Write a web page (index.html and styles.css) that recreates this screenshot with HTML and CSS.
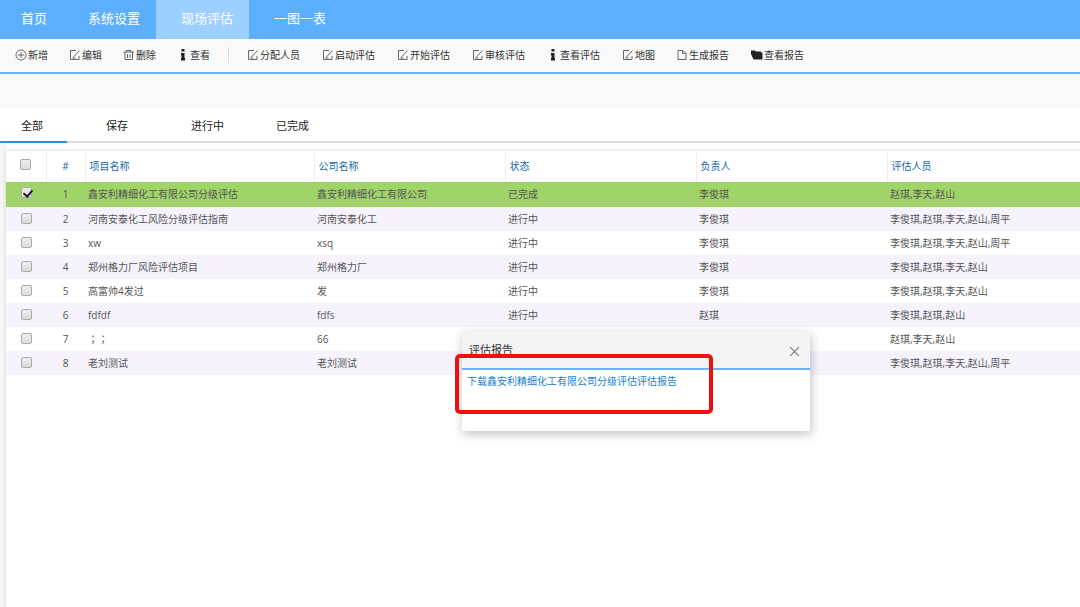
FILE: index.html
```html
<!DOCTYPE html>
<html lang="zh-CN">
<head>
<meta charset="utf-8">
<title>现场评估</title>
<link rel="stylesheet" href="styles.css">
</head>
<body>
<svg class="sprite" aria-hidden="true">
  <symbol id="i-add" viewBox="0 0 12 12"><circle cx="6" cy="6" r="5"/><path d="M6 3v6M3 6h6"/></symbol>
  <symbol id="i-edit" viewBox="0 0 12 12"><path d="M7 1.500H1.500v9h8.500V7M4 8.500L10.500 1.500M3.500 9h3"/></symbol>
  <symbol id="i-del" viewBox="0 0 12 12"><path d="M0.500 3h10.500M3.500 3V1.500h4.500V3M2 3v7.500h7.500V3M4.500 5v4M7 5v4"/></symbol>
  <symbol id="i-info" viewBox="0 0 12 12"><path class="solid" d="M4.500 0h3v2.500h-3zM4 4h3.500v2.500H4zM4.500 6h3v3h-3zM4 9h4v2.500H4z"/></symbol>
  <symbol id="i-file" viewBox="0 0 12 12"><path d="M2 1.500h5L10 4.500v6H2zM6.500 1.500v3h3"/></symbol>
  <symbol id="i-folder" viewBox="0 0 12 12"><path class="solid" d="M0 1.500h4l1 1h5V3.500h1.500V10.500H2.500L0 5z"/></symbol>
</svg>

<nav class="nav">
  <a href="#">首页</a>
  <a href="#">系统设置</a>
  <a href="#" class="active" aria-current="page">现场评估</a>
  <a href="#">一图一表</a>
</nav>

<div class="toolbar">
  <button type="button" class="tool"><svg><use href="#i-add"/></svg>新增</button>
  <button type="button" class="tool"><svg><use href="#i-edit"/></svg>编辑</button>
  <button type="button" class="tool"><svg><use href="#i-del"/></svg>删除</button>
  <button type="button" class="tool last"><svg><use href="#i-info"/></svg>查看</button>
  <span class="divider"></span>
  <button type="button" class="tool wide"><svg><use href="#i-edit"/></svg>分配人员</button>
  <button type="button" class="tool wide"><svg><use href="#i-edit"/></svg>启动评估</button>
  <button type="button" class="tool wide"><svg><use href="#i-edit"/></svg>开始评估</button>
  <button type="button" class="tool wide"><svg><use href="#i-edit"/></svg>审核评估</button>
  <button type="button" class="tool wide"><svg><use href="#i-info"/></svg>查看评估</button>
  <button type="button" class="tool"><svg><use href="#i-edit"/></svg>地图</button>
  <button type="button" class="tool wide"><svg><use href="#i-file"/></svg>生成报告</button>
  <button type="button" class="tool wide"><svg><use href="#i-folder"/></svg>查看报告</button>
</div>

<div class="filter"></div>

<div class="tabs">
  <button type="button" class="tab active">全部</button>
  <button type="button" class="tab">保存</button>
  <button type="button" class="tab">进行中</button>
  <button type="button" class="tab">已完成</button>
</div>

<main class="content">
  <div class="panel">
    <table class="grid">
      <colgroup><col class="c-check"><col class="c-num"><col class="c-name"><col class="c-mid"><col class="c-mid"><col class="c-mid"><col></colgroup>
      <thead>
        <tr><th><input type="checkbox" aria-label="全选"></th><th>#</th><th>项目名称</th><th>公司名称</th><th>状态</th><th>负责人</th><th>评估人员</th></tr>
      </thead>
      <tbody>
        <tr class="selected"><td><input type="checkbox" aria-label="1" checked></td><td>1</td><td>鑫安利精细化工有限公司分级评估</td><td>鑫安利精细化工有限公司</td><td>已完成</td><td>李俊琪</td><td>赵琪,李天,赵山</td></tr>
        <tr><td><input type="checkbox" aria-label="2"></td><td>2</td><td>河南安泰化工风险分级评估指南</td><td>河南安泰化工</td><td>进行中</td><td>李俊琪</td><td>李俊琪,赵琪,李天,赵山,周平</td></tr>
        <tr><td><input type="checkbox" aria-label="3"></td><td>3</td><td>xw</td><td>xsq</td><td>进行中</td><td>李俊琪</td><td>李俊琪,赵琪,李天,赵山,周平</td></tr>
        <tr><td><input type="checkbox" aria-label="4"></td><td>4</td><td>郑州格力厂风险评估项目</td><td>郑州格力厂</td><td>进行中</td><td>李俊琪</td><td>李俊琪,赵琪,李天,赵山</td></tr>
        <tr><td><input type="checkbox" aria-label="5"></td><td>5</td><td>高富帅4发过</td><td>发</td><td>进行中</td><td>李俊琪</td><td>李俊琪,赵琪,李天,赵山</td></tr>
        <tr><td><input type="checkbox" aria-label="6"></td><td>6</td><td>fdfdf</td><td>fdfs</td><td>进行中</td><td>赵琪</td><td>李俊琪,赵琪,赵山</td></tr>
        <tr><td><input type="checkbox" aria-label="7"></td><td>7</td><td class="centered-marks" lang="zh-TW">；；</td><td>66</td><td></td><td></td><td>赵琪,李天,赵山</td></tr>
        <tr><td><input type="checkbox" aria-label="8"></td><td>8</td><td>老刘测试</td><td>老刘测试</td><td></td><td></td><td>李俊琪,赵琪,李天,赵山,周平</td></tr>
      </tbody>
    </table>
  </div>
</main>

<section class="dialog" role="dialog" aria-labelledby="dialog-title">
  <header class="dialog-head">
    <h2 id="dialog-title">评估报告</h2>
    <button type="button" class="close" aria-label="关闭"><svg viewBox="0 0 10 10"><path d="M1 1l8 8M9 1L1 9"/></svg></button>
  </header>
  <div class="dialog-body"><a href="#">下载鑫安利精细化工有限公司分级评估评估报告</a></div>
  <div class="highlight"></div>
</section>
</body>
</html>
```

FILE: styles.css
```css
* { box-sizing: border-box; }

body {
  margin: 0;
  min-height: 100vh;
  display: flex;
  flex-direction: column;
  position: relative;
  background: #fff;
  color: #555;
  font: 10px/16px "Open Sans", "Noto Sans CJK SC", sans-serif;
}

button {
  font: inherit;
  color: inherit;
  background: none;
  border: 0;
  padding: 0;
  text-align: left;
  white-space: nowrap;
  cursor: pointer;
}

a { text-decoration: none; }

.sprite { display: none; }

.nav {
  display: flex;
  height: 39px;
  background: #5cafff;
}

.nav a {
  padding: 0 16px 0 25px;
  color: #fff;
  font-size: 13px;
  line-height: 37px;
}

.nav a:first-child { padding-left: 21px; }
.nav a.active { background: #9dcfff; }

.toolbar {
  display: flex;
  align-items: center;
  height: 35px;
  padding: 0 0 2px 15px;
  background: #f9f9f9;
  border-bottom: 2px solid #6bb2f5;
  color: #333;
}

.tool {
  display: flex;
  align-items: center;
  flex: none;
  width: 54px;
}

.tool.wide { width: 75px; }
.tool.last { width: 51px; }

.tool svg {
  width: 12px;
  height: 12px;
  margin-right: 1px;
  fill: none;
  stroke: #666;
}

.solid { fill: #222; stroke: none; }

.divider {
  width: 1px;
  height: 16px;
  margin-right: 18px;
  background: #ddd;
}

.filter {
  height: 34px;
  background: #f9f9f9;
}

.tabs {
  display: flex;
  gap: 18px;
  height: 35px;
  border-bottom: 2px solid #ddd;
}

.tab {
  width: 67px;
  height: 35px;
  padding: 2px 0 0 21px;
  border-bottom: 2px solid transparent;
  font-size: 11px;
  color: #222;
}

.tab.active { border-color: #2f8fdd; }

.content {
  flex: 1;
  display: flex;
  padding: 8px 0 0 6px;
  background: linear-gradient(90deg, #f6f6f6 6px, #fff 6px);
}

.panel {
  flex: 1;
  background: #fff;
  box-shadow: 0 0 4px #ccc;
}

.grid {
  width: 100%;
  table-layout: fixed;
  border-collapse: collapse;
}

.c-check { width: 40px; }
.c-num { width: 39px; }
.c-name { width: 229px; }
.c-mid { width: 191px; }

.grid th {
  height: 31px;
  padding: 0 4px 2px;
  border-left: 1px solid #eee;
  color: #2068a8;
  font-weight: 400;
  text-align: left;
}

.grid th:first-child { border-left: 0; }

.grid td {
  height: 24px;
  padding: 0 3px;
  white-space: nowrap;
}

.grid th:nth-child(-n+2),
.grid td:nth-child(-n+2) { text-align: center; }

.grid tbody tr:nth-child(even) { background: #f6f3fc; }
.grid tbody tr.selected { background: #a0d468; }
.grid tr.selected td { height: 25px; padding-bottom: 2px; }

.grid .centered-marks {
  font-family: "Noto Sans CJK TC", sans-serif;
  text-spacing-trim: space-all;
}

.grid input {
  appearance: none;
  display: block;
  width: 11px;
  height: 11px;
  margin: 0 auto 2px;
  border: 1px solid #aaa;
  border-radius: 2px;
  background: linear-gradient(#eee, #ddd);
}

.grid input:checked::before {
  content: "";
  display: block;
  width: 4px;
  height: 7px;
  margin: 0 0 0 3px;
  border: solid #222;
  border-width: 0 2px 2px 0;
  transform: rotate(40deg);
}

.dialog {
  position: absolute;
  left: 462px;
  top: 332px;
  width: 348px;
  height: 99px;
  background: #fff;
  box-shadow: 1px 3px 10px rgba(0, 0, 0, 0.25);
}

.dialog-head {
  display: flex;
  justify-content: space-between;
  align-items: center;
  height: 38px;
  padding: 0 10px 0 7px;
  background: #f4f4f4;
  border-bottom: 2px solid #6bb2f5;
}

.dialog-head h2 {
  margin: 0;
  color: #333;
  font-size: 11px;
  font-weight: 400;
}

.close { padding: 3px 0 0; }

.close svg {
  display: block;
  width: 11px;
  height: 11px;
  fill: none;
  stroke: #777;
}

.dialog-body { padding: 3px 5px; }
.dialog-body a { color: #2180cc; }

.highlight {
  position: absolute;
  left: -7px;
  top: 22px;
  width: 258px;
  height: 60px;
  border: 4px solid #f00f0f;
  border-radius: 5px;
  pointer-events: none;
}
```
